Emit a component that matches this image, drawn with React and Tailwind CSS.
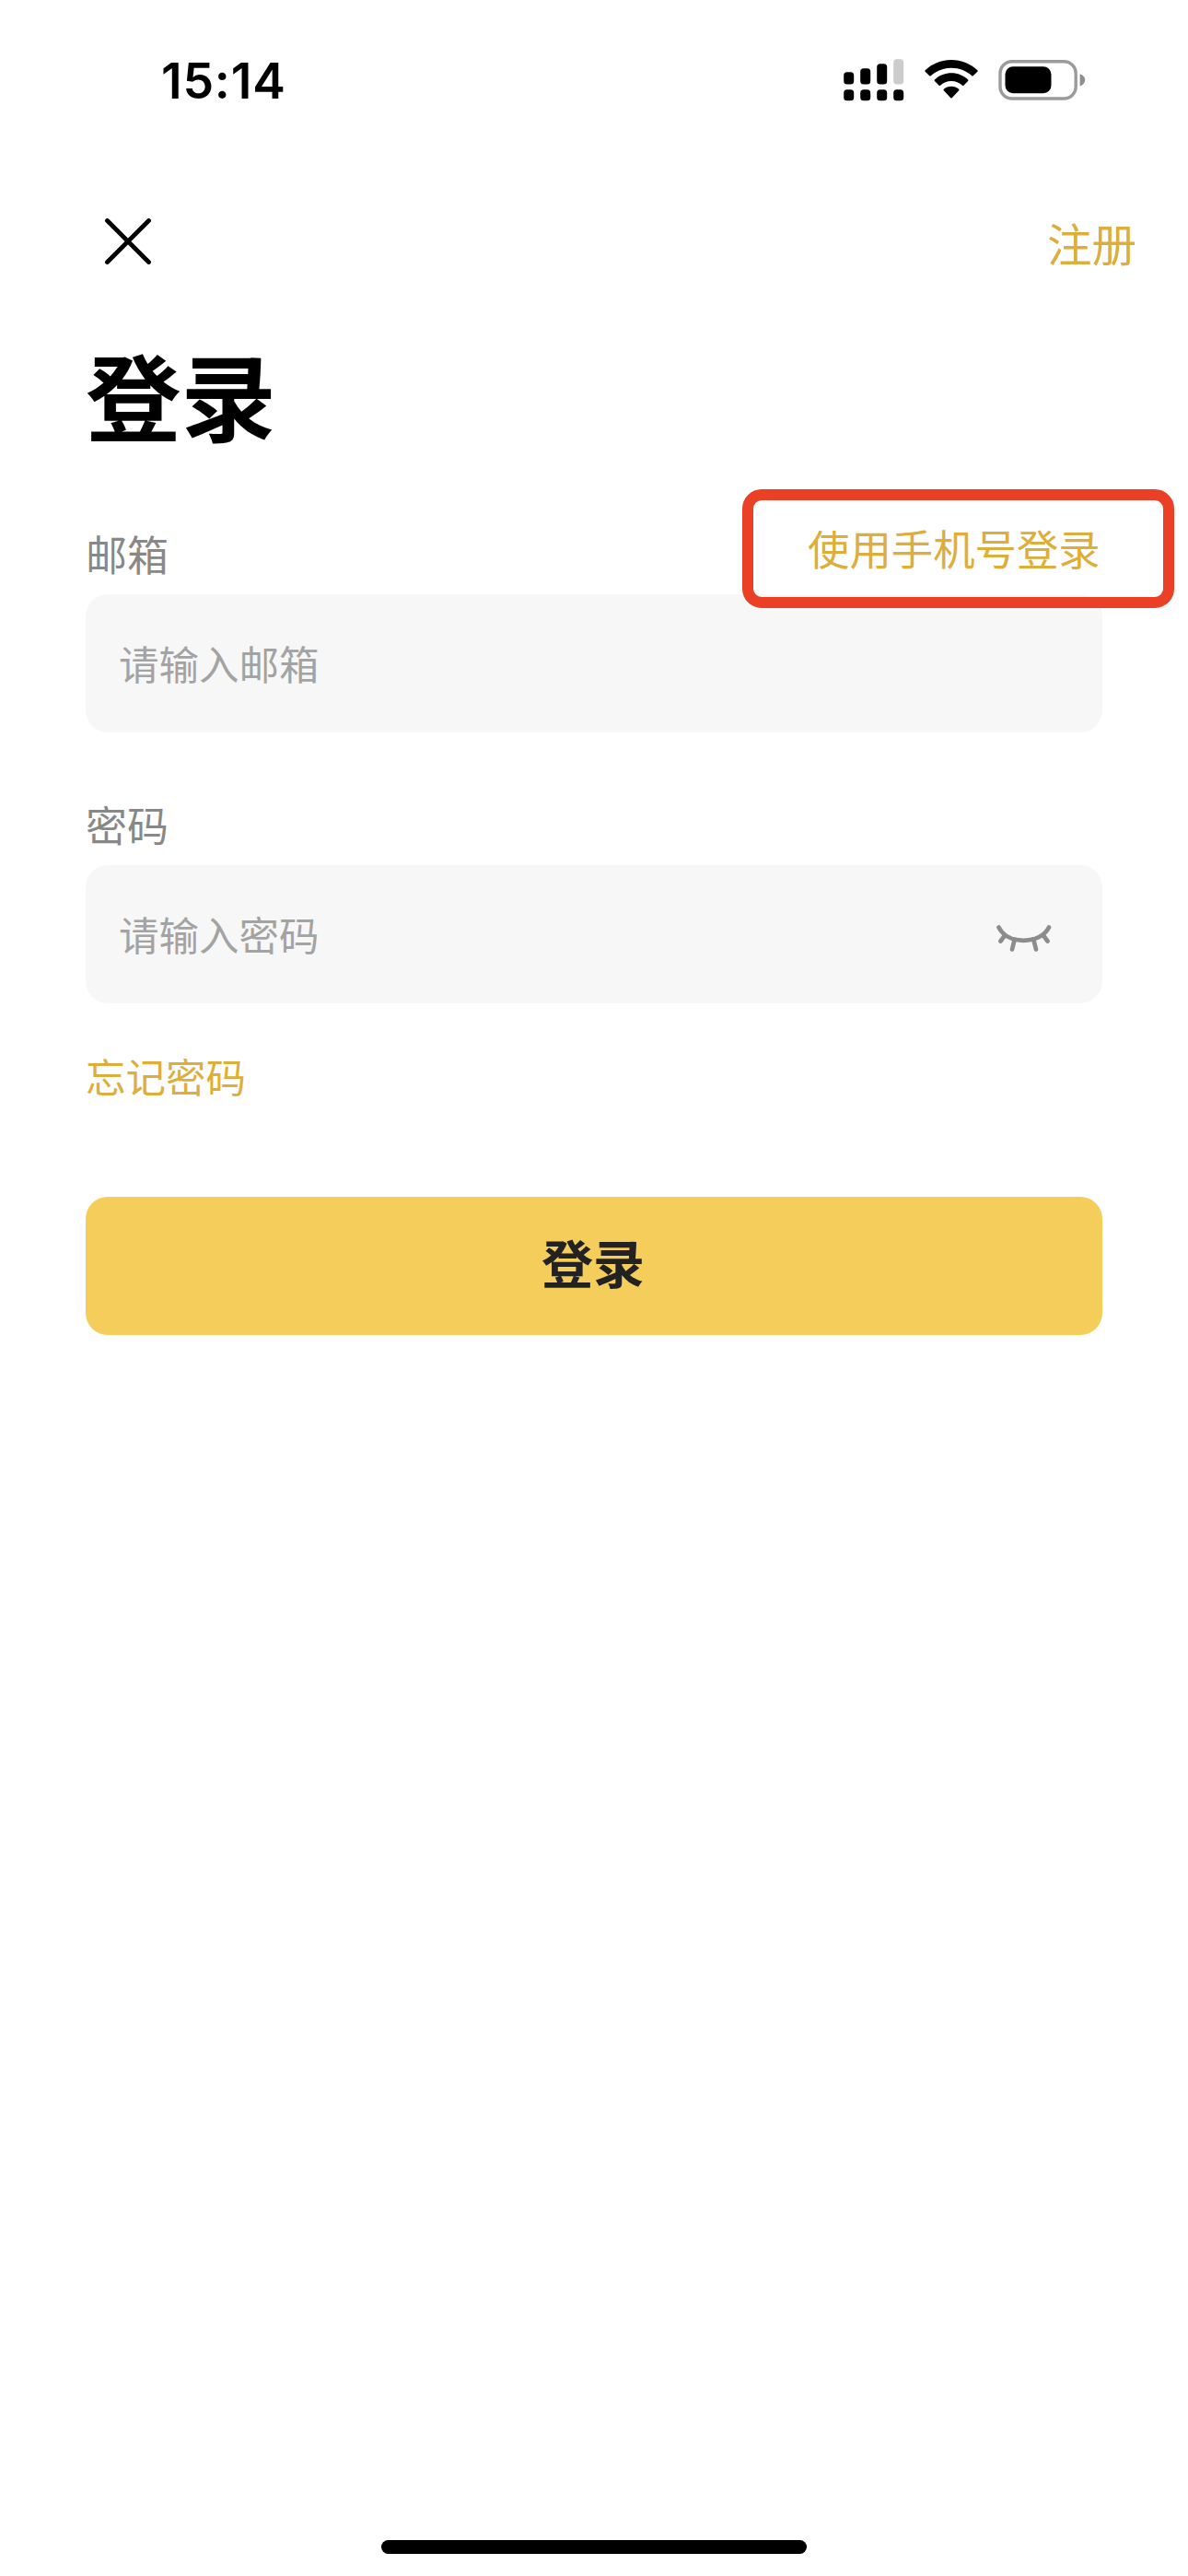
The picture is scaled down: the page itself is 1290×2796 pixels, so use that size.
function SignalIcon() {
  return (
    <svg className="w-[66px] h-[46px] shrink-0" viewBox="0 0 66 46" aria-hidden="true">
      <rect x="0.2" y="14.2" width="11" height="13.300" rx="3.5" />
      <rect x="18.2" y="10.2" width="11" height="17.300" rx="3.5" />
      <rect x="36.2" y="5.2" width="11" height="22.300" rx="3.5" />
      <rect x="54.2" y="0.2" width="11" height="27.300" rx="3.5" fill="#cccccc" />
      {[0.2, 18.2, 36.2, 54.2].map((x) => (
        <rect key={x} x={x} y="33.2" width="11" height="12" rx="3.5" />
      ))}
    </svg>
  );
}

function WifiIcon() {
  return (
    <svg className="w-[58px] h-[42px] shrink-0" viewBox="0 0 58 42" aria-hidden="true">
      <path d="M29 0C18 0 8 4.300 0.600 11.300Q0 12 0.600 12.700L5.300 17.300Q6 18 6.700 17.300C12.500 12 20.300 8.800 29 8.800S45.500 12 51.300 17.300Q52 18 52.700 17.300L57.400 12.700Q58 12 57.400 11.300C50 4.300 40 0 29 0Z" />
      <path d="M29 14.300C22 14.300 15.600 17 10.900 21.500Q10.200 22.200 10.900 22.900L15.600 27.700Q16.300 28.400 17 27.700C20.200 24.900 24.400 23.100 29 23.100S37.800 24.900 41 27.700Q41.700 28.400 42.400 27.700L47.100 22.900Q47.800 22.200 47.100 21.500C42.400 17 36 14.300 29 14.300Z" />
      <path d="M29 28.700C25.800 28.700 23 29.900 20.800 31.800Q20.100 32.500 20.800 33.200L28.300 41.200Q29 41.900 29.700 41.200L37.200 33.200Q37.900 32.500 37.200 31.800C35 29.900 32.200 28.700 29 28.700Z" />
    </svg>
  );
}

function BatteryIcon() {
  return (
    <svg className="w-[95px] h-[44px] shrink-0" viewBox="0 0 95 44" aria-hidden="true">
      <rect x="2" y="1.700" width="82.200" height="40.300" rx="13" fill="none" stroke="#9b9b9b" strokeWidth="3.400" />
      <rect x="7.500" y="7.300" width="50" height="29" rx="8.500" />
      <path d="M88.600 15.300C91.800 16.300 94.200 18.800 94.200 21.800S91.800 27.500 88.600 28.500Z" fill="#8e8e8e" />
    </svg>
  );
}

function ClosedEyeIcon() {
  return (
    <svg
      className="w-[60px] h-[30px] mt-[9px] shrink-0"
      viewBox="0 0 60 30"
      fill="none"
      stroke="#8c8c8c"
      strokeWidth="4.700"
      strokeLinecap="round"
      aria-hidden="true"
    >
      <path d="M2.500 2.500C7 11.500 17 16.800 29.500 16.800S52.500 11.500 57 2.500" />
      <path d="M8.500 12L4.500 17.500M19.500 16.500L17 26.500M40.500 16.500L43 26.500M51.500 12L55.500 17.500" />
    </svg>
  );
}

function Field({ label, placeholder, children }) {
  return (
    <div>
      <div className="h-[57px] text-[45px] leading-[55px] text-[#888888]">{label}</div>
      <div className="mt-[15px] h-[150px] pl-[36px] pr-[55px] rounded-[24px] bg-[#f7f7f7] flex items-center justify-between">
        <span className="text-[43.500px] leading-[60px] text-[#a3a3a3]">{placeholder}</span>
        {children}
      </div>
    </div>
  );
}

export default function App() {
  return (
    <div className="w-[1290px] h-[2796px] bg-white flex flex-col overflow-hidden font-['Noto_Sans_CJK_SC',sans-serif]">
      {/* Status bar */}
      <header className="h-[176px] pt-[58px] pl-[175px] pr-[111px] flex items-start justify-between">
        <span className="font-['Inter',sans-serif] font-semibold text-[53.500px] leading-[60px] tracking-[0.800px] text-black">15:14</span>
        <div className="h-[60px] pt-[6px] flex items-start">
          <SignalIcon />
          <div className="ml-[22px] mt-[1px]"><WifiIcon /></div>
          <div className="ml-[22px] mt-[1px]"><BatteryIcon /></div>
        </div>
      </header>

      {/* Close / register */}
      <nav className="h-[180px] pl-[114px] pr-[56px] flex items-center justify-between">
        <button type="button" aria-label="关闭" className="-mt-[8px]">
          <svg className="w-[50px] h-[50px]" viewBox="0 0 50 50" fill="none" stroke="#000" strokeWidth="4.800" strokeLinecap="round">
            <path d="M2.500 2.500L47.500 47.500M47.500 2.500L2.500 47.500" />
          </svg>
        </button>
        <button type="button" className="-mt-[6px] text-[48.500px] leading-[60px] text-[#deae3c]">注册</button>
      </nav>

      <main className="px-[93px] flex flex-col">
        <h1 className="h-[140px] text-[103.500px] leading-[142px] font-bold text-black">登录</h1>

        <div className="relative mt-[77px]">
          <Field label="邮箱" placeholder="请输入邮箱" />
          {/* Highlighted switch to phone login, overlaps the email field */}
          <button
            type="button"
            className="absolute left-[713px] top-[-42px] w-[469px] h-[129px] pl-[59px] pb-[3px] rounded-[21px] border-[12px] border-[#eb4026] flex items-center text-[45.400px] leading-[60px] whitespace-nowrap text-[#deae3c]"
          >
            使用手机号登录
          </button>
        </div>

        <div className="mt-[72px]">
          <Field label="密码" placeholder="请输入密码">
            <ClosedEyeIcon />
          </Field>
        </div>

        <a className="mt-[49px] h-[60px] self-start text-[43.500px] leading-[60px] text-[#deae3c]">忘记密码</a>

        <button
          type="button"
          className="mt-[101px] h-[150px] pb-[11px] pr-[2px] rounded-[24px] bg-[#f4cd5a] text-[56px] leading-[80px] font-bold text-[#222222] flex items-center justify-center"
        >
          登录
        </button>
      </main>

      {/* Home indicator */}
      <div className="mt-auto mb-[24px] self-center w-[462px] h-[15px] rounded-full bg-black" />
    </div>
  );
}
